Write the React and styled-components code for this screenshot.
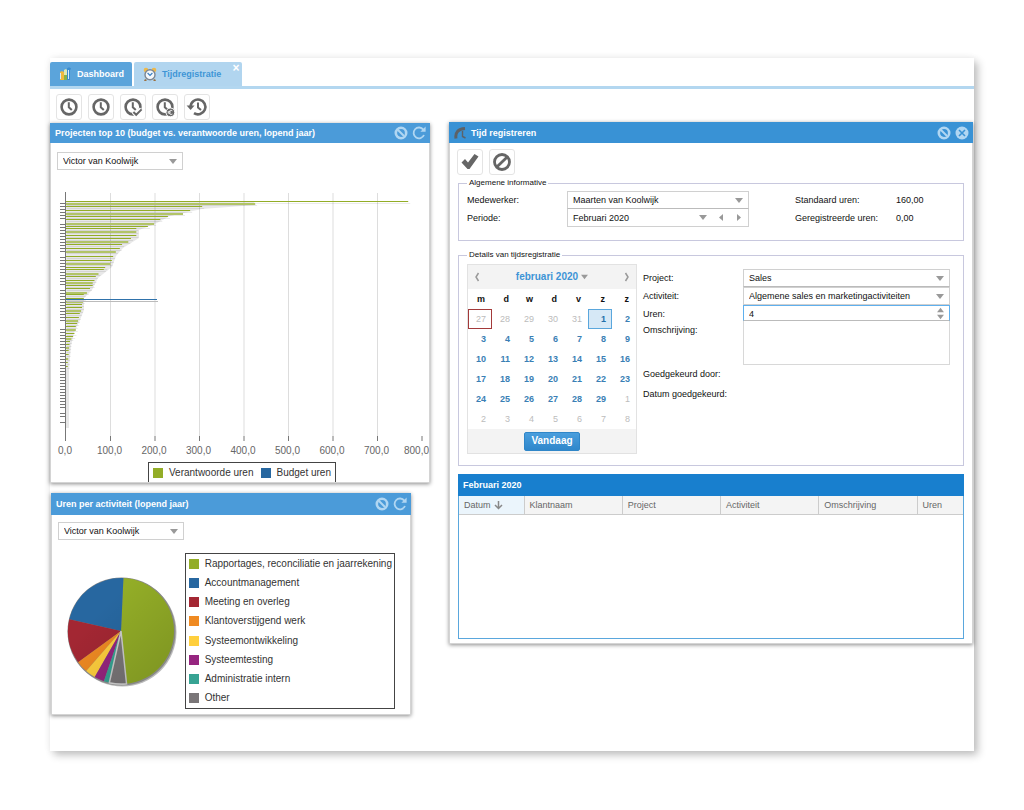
import React from 'react';
import styled, { createGlobalStyle, css } from 'styled-components';

const GlobalStyle = createGlobalStyle`
  *, *::before, *::after { box-sizing: border-box; }
  body {
    margin: 0;
    background: #fff;
    color: #111;
    font: 9px/12px 'Liberation Sans', Arial, sans-serif;
  }
  button, input, select, textarea { font: inherit; color: inherit; margin: 0; border-radius: 0; }
  button { padding: 0; border: 0; background: none; cursor: pointer; }
  svg { display: block; }
`;

const Page = styled.div`
  padding: 58px 50px;
`;

const AppFrame = styled.main`
  padding: 4px 0 36px;
  background: #fff;
  box-shadow: 4px 4px 8px rgba(0, 0, 0, 0.24), 0 0 8px rgba(0, 0, 0, 0.06);
`;

const TabBar = styled.nav`
  display: flex;
  gap: 2px;
  border-bottom: 3px solid #b3d7f0;
`;

const Tab = styled.a`
  display: flex;
  align-items: center;
  gap: 5px;
  height: 24px;
  padding: 0 ${(p) => (p.$closable ? '2px' : '8px')} 0 9px;
  border-radius: 2px 2px 0 0;
  background: ${(p) => (p.$current ? '#b1d5ef' : '#5ba4db')};
  color: ${(p) => (p.$current ? '#3f95d6' : '#fff')};
  font-weight: bold;
  text-decoration: none;
`;

const TabClose = styled.button`
  align-self: flex-start;
  width: 8px;
  height: 12px;
  margin-left: 6px;
  color: #fff;
  font-size: 12px;
  line-height: 12px;
`;

const Toolbar = styled.div`
  display: flex;
  gap: 6px;
  padding: ${(p) => (p.$inWindow ? '6px 7px 3px' : '5px 6px 2px')};
`;

const ToolButton = styled.button`
  display: grid;
  place-items: center;
  width: 26px;
  height: 26px;
  border: 1px solid #e4e4e4;
  border-radius: 3px;
  color: #666;
`;

const Workspace = styled.div`
  display: grid;
  grid-template-columns: 380fr 524fr;
  align-items: start;
  gap: 19px;
  padding-right: 1px;
`;

const Column = styled.div`
  display: grid;
  gap: 10px;
  padding-top: 1px;
`;

const Panel = styled.section`
  margin: ${(p) => (p.$narrow ? '0 19px 0 1px' : '0')};
  border: 1px solid #d4d4d4;
  border-top: 0;
  background: #fff;
  box-shadow: 0 1px 4px rgba(0, 0, 0, 0.45);
`;

const HEADER_HEIGHTS = { small: '20px', medium: '21px', large: '22px' };

const PanelHeader = styled.header`
  display: flex;
  align-items: center;
  gap: 4px;
  height: ${(p) => HEADER_HEIGHTS[p.$size]};
  margin: 0 -1px;
  padding: 0 4px 0 5px;
  background: ${(p) => (p.$active ? '#3992d5' : '#4b9bd9')};
  color: #fff;
`;

const PanelTitle = styled.h2`
  flex: 1;
  margin: 0;
  font-size: 9px;
  line-height: 12px;
  white-space: nowrap;
`;

const HeaderButton = styled.button`
  width: 14px;
  height: 14px;
  color: #b0d6f2;
`;

const SelectBox = styled.div`
  display: grid;
  flex: 1;
  align-items: center;
  height: ${(p) => (p.$bare ? '100%' : '18px')};
  border: ${(p) => (p.$bare ? '0' : '1px solid #d0d0d0')};
  ${(p) => p.$joined && css`border-bottom-color: #bbb;`}
  svg { grid-area: 1 / 1; justify-self: end; margin-right: 5px; pointer-events: none; }
`;

const Select = styled.select`
  grid-area: 1 / 1;
  width: 100%;
  height: 100%;
  padding: 0 14px 0 5px;
  border: 0;
  appearance: none;
  background: none;
  outline: 0;
`;

const EmployeeFilter = styled.div`
  width: 126px;
  padding-top: ${(p) => (p.$tight ? '7px' : '9px')};
  margin-left: 6px;
`;

const Chart = styled.svg`
  width: 100%;
  font: 10px 'Liberation Sans', Arial, sans-serif;
`;

const BarLegend = styled.ul`
  display: flex;
  gap: 7px;
  width: fit-content;
  height: 20px;
  margin: 0 93px 0 auto;
  padding: 0 4px;
  border: 1px solid #444;
  border-bottom: 0;
  list-style: none;
`;

const LegendItem = styled.li`
  display: flex;
  align-items: center;
  gap: 6px;
  color: #333;
  font-size: 10px;
  line-height: 12px;
  white-space: nowrap;
`;

const Swatch = styled.span`
  width: 10px;
  height: 10px;
  background: ${(p) => p.$color};
`;

const PieArea = styled.div`
  display: flex;
  justify-content: space-between;
  align-items: center;
  padding: 13px 15px 5px 12px;
`;

const PieLegend = styled.ul`
  display: flex;
  flex-direction: column;
  justify-content: space-around;
  min-height: 156px;
  margin: 0;
  padding: 0 2px 0 3px;
  border: 1px solid #444;
  list-style: none;
`;

const Window = styled(Panel)`
  padding-bottom: 4px;
`;

const Group = styled.fieldset`
  margin: 0 8px ${(p) => (p.$last ? '8px' : '9px')};
  min-width: 0;
  padding: ${(p) => (p.$last ? '4px 13px 11px 8px' : '3px 5px 13px 8px')};
  border: 1px solid #c8c8de;
`;

const Legend = styled.legend`
  padding: 0 2px;
  font-size: 8px;
  line-height: 10px;
`;

const InfoGrid = styled.div`
  display: grid;
  grid-template-columns: 100px 182fr 46fr 101px 62fr;
  grid-template-rows: 18px 18px;
`;

const Label = styled.label`
  grid-column: ${(p) => p.$col || 1};
  padding-top: 3px;
  white-space: nowrap;
`;

const Value = styled.output`
  grid-column: 5;
  padding-top: 3px;
`;

const FieldRow = styled.div`
  display: flex;
  align-items: center;
  grid-column: 2;
  height: 18px;
  border: 1px solid #d0d0d0;
  border-top: 0;
`;

const StepButton = styled.button`
  display: grid;
  place-items: center;
  width: ${(p) => (p.$vertical ? '9px' : '18px')};
  height: ${(p) => (p.$vertical ? '7px' : '16px')};
`;

const DetailLayout = styled.div`
  display: grid;
  grid-template-columns: 170px 1fr;
  gap: 6px;
`;

const Calendar = styled.section`
  border: 1px solid #e2e2e2;
`;

const CalendarBar = styled.div`
  display: flex;
  align-items: center;
  justify-content: ${(p) => (p.$center ? 'center' : 'space-between')};
  height: 24px;
  padding: 0 6px;
  background: #f3f3f3;
`;

const MonthButton = styled.button`
  display: flex;
  align-items: center;
  gap: 3px;
  color: #3d94d6;
  font-size: 10px;
  font-weight: bold;
`;

const MonthTable = styled.table`
  width: 100%;
  border-collapse: collapse;
  table-layout: fixed;
  th { height: 20px; padding: 0 7px 0 0; color: #111; text-align: right; }
  td { height: 20px; padding: 0; }
`;

const Day = styled.button`
  display: block;
  width: 100%;
  height: 20px;
  padding-right: 5px;
  border: 1px solid transparent;
  color: ${(p) => (p.$outside ? '#bcbcbc' : '#3a7fb5')};
  font-weight: ${(p) => (p.$outside ? 'normal' : 'bold')};
  text-align: right;
  ${(p) => p.$today && css`border-color: #a33a3a;`}
  ${(p) => p.$selected && css`border-color: #5aa7dd; background: #d6e8f6; color: #2470aa;`}
`;

const TodayButton = styled.button`
  height: 19px;
  padding: 0 6px;
  border: 1px solid #2f86c8;
  border-radius: 2px;
  background: linear-gradient(#4a9edd, #2f87cb);
  color: #fff;
  font-size: 10px;
  font-weight: bold;
`;

const DetailGrid = styled.div`
  display: grid;
  grid-template-columns: 100px 1fr;
  grid-template-rows: 18px 18px 16px 44px 20px 20px;
  padding-top: 5px;
`;

const HoursBox = styled.div`
  display: flex;
  align-items: center;
  height: 16px;
  padding-right: 4px;
  border: 1px solid #5fb0ee;
  border-bottom-color: #bbb;
`;

const HoursInput = styled.input`
  flex: 1;
  min-width: 0;
  height: 14px;
  padding: 2px 5px 0;
  border: 0;
  outline: 0;
  background: none;
  appearance: textfield;
  &::-webkit-inner-spin-button { appearance: none; }
`;

const Notes = styled.textarea`
  height: 44px;
  border: 1px solid #d8d8d8;
  border-top: 0;
  resize: none;
  outline: 0;
`;

const TableFrame = styled.div`
  margin: 0 8px;
  border: 1px solid #5aa7dd;
  border-top: 0;
`;

const HoursTable = styled.table`
  width: 100%;
  border-collapse: collapse;
  table-layout: fixed;
  caption {
    height: 22px;
    margin: 0 -1px;
    padding: 5px;
    background: #187fce;
    color: #fff;
    font-weight: bold;
    text-align: left;
  }
  td { height: 124px; }
`;

const HeaderCell = styled.th`
  width: ${(p) => p.$width};
  height: 18px;
  padding: 0 5px;
  border-right: 1px solid #ccc;
  border-bottom: 1px solid #ccc;
  background: ${(p) => (p.$sorted ? '#ebf5fc' : '#f4f4f4')};
  color: #666;
  font-weight: normal;
  text-align: left;
  &:last-child { border-right: 0; }
`;

const SortLabel = styled.span`
  display: flex;
  align-items: center;
  gap: 3px;
`;

const ARROWS = {
  down: 'M0 1h8L4 6z',
  up: 'M0 6h8L4 1z',
  left: 'M6 0v7L2 3.5z',
  right: 'M2 0v7L6 3.5z',
};

function Arrow({ dir = 'down', size = 8 }) {
  return (
    <svg width={size} height={size - 1} viewBox="0 0 8 7" fill="#999" aria-hidden="true">
      <path d={ARROWS[dir]} />
    </svg>
  );
}

function Clock({ badge }) {
  return (
    <svg width="22" height="22" viewBox="0 0 22 22" fill="none" stroke="currentColor" strokeWidth="2.6" aria-hidden="true">
      {badge === 'history' ? (
        <>
          <path d="M4.6 10.5A7.4 7.4 0 1 1 8 17.2" />
          <path d="M.6 9.5h8l-4 4.600z" fill="currentColor" stroke="none" />
          <path d="M12 6.500v5l3 2.600" strokeWidth="2" />
        </>
      ) : (
        <>
          <circle cx="11" cy="11" r="7.4" />
          <path d="M10.8 6.2v5l3 2.8" strokeWidth="2" />
        </>
      )}
      {badge === 'check' && (
        <>
          <path d="M11.500 16l2.500 2.500 5.500-5.500" stroke="#fff" strokeWidth="4.500" />
          <path d="M11.400 16l2.800 2.800 5.400-5.400" strokeWidth="2" />
        </>
      )}
      {badge === 'euro' && (
        <>
          <circle cx="16.4" cy="16.4" r="4.400" fill="currentColor" stroke="#fff" strokeWidth="1" />
          <path d="M18.400 14.800a2.100 2.100 0 1 0 0 3.200M13.600 15.800h3.200M13.600 17h3.200" stroke="#fff" strokeWidth=".8" />
        </>
      )}
    </svg>
  );
}

const GLYPHS = {
  refresh: (
    <>
      <path d="M11.300 3.600A5.400 5.400 0 1 0 12 9" />
      <path d="M13.600.6v5.200H8.400z" fill="currentColor" stroke="none" />
    </>
  ),
  restore: (
    <>
      <circle cx="7" cy="7" r="5.200" strokeWidth="2.600" />
      <path d="M4 4l6 6" strokeWidth="2" />
    </>
  ),
  close: (
    <>
      <circle cx="7" cy="7" r="6.500" fill="currentColor" stroke="none" />
      <path d="M4 4l6 6M10 4l-6 6" stroke="#3992d5" strokeWidth="1.600" />
    </>
  ),
};

const Glyph = ({ name }) => (
  <svg width="14" height="14" viewBox="0 0 14 14" fill="none" stroke="currentColor" strokeWidth="1.8" aria-hidden="true">
    {GLYPHS[name]}
  </svg>
);

const ChartTabIcon = () => (
  <svg width="13" height="14" viewBox="0 0 13 14" aria-hidden="true">
    <path d="M1 5l2-1 2 1v8H1z" fill="#f0b93c" />
    <path d="M5 3l2-1 1 1v10H5z" fill="#dfe9b2" />
    <path d="M5 8h3v5H5z" fill="#86b34a" />
    <path d="M8 2c0-2 4-2 4 0l-1 1v10H8z" fill="#3a8cd0" />
    <path d="M9 3h1v9H9zM1 6h1v6H1z" fill="#d7ebfa" />
  </svg>
);

const AlarmIcon = () => (
  <svg width="14" height="14" viewBox="0 0 14 14" aria-hidden="true">
    <path d="M2 12l-1 2h2l1-1zM12 12l1 2h-2l-1-1z" fill="#9a7040" />
    <circle cx="3" cy="3" r="2.3" fill="#edb94b" />
    <circle cx="11" cy="3" r="2.3" fill="#edb94b" />
    <circle cx="7" cy="7.8" r="5" fill="#f4f8fb" stroke="#7d8793" strokeWidth="1.4" />
    <path d="M4.6 6l2.4 2.4L9.4 6" fill="none" stroke="#397fc1" strokeWidth="1.2" />
  </svg>
);

const GaugeIcon = () => (
  <svg width="13" height="14" viewBox="0 0 13 14" fill="none" stroke="#5c6268" aria-hidden="true">
    <path d="M2 12.500C1 6.500 4 3 11 2.600" strokeWidth="3" />
    <path d="M8.500 5v5.500l3 1.500" strokeWidth="1.400" />
  </svg>
);

const EMPLOYEES = ['Victor van Koolwijk', 'Maarten van Koolwijk'];

function EmployeeSelect({ id, value, label, joined }) {
  return (
    <SelectBox $joined={joined}>
      <Select id={id} aria-label={label} defaultValue={value}>
        {EMPLOYEES.map((name) => <option key={name}>{name}</option>)}
      </Select>
      <Arrow />
    </SelectBox>
  );
}

function PanelHead({ title, second, size, active, children }) {
  return (
    <PanelHeader $size={size} $active={active}>
      {children}
      <PanelTitle>{title}</PanelTitle>
      <HeaderButton aria-label="Venster herstellen"><Glyph name="restore" /></HeaderButton>
      <HeaderButton aria-label={second === 'close' ? 'Sluiten' : 'Vernieuwen'}><Glyph name={second} /></HeaderButton>
    </PanelHeader>
  );
}

const GREEN = '#93ad27';
const BLUE = '#2767a0';

// Vertical position and booked hours of every project.
const BARS = [
  [31, 769], [33, 425], [36, 306], [40, 279], [43, 263], [46, 229], [49, 212], [53, 198],
  [56, 184], [58, 158], [61, 158], [65, 158], [68, 146], [71, 140], [74, 126], [78, 121],
  [81, 112], [86, 106], [90, 103], [93, 100], [97, 88], [99, 85], [103, 73], [106, 67],
  [110, 64], [112, 60], [115, 60], [118, 54], [122, 47], [124, 40], [128, 40], [131, 38],
  [134, 36], [137, 36], [140, 34], [143, 31], [147, 29], [150, 27], [153, 25], [156, 22],
  [159, 22], [163, 19], [166, 16], [168, 12], [171, 9], [174, 8], [177, 7], [180, 6],
  [184, 6], [188, 5], [192, 4], [196, 4],
];

const TICKS = Array.from({ length: 74 }, (_, i) => 33 + i * 3).filter((y) => ![51, 84, 117, 153, 156, 240, 249].includes(y));

function BarChart() {
  const x = (hours) => 16 + hours * 0.445;
  return (
    <Chart viewBox="1 0 378 292" role="img" aria-label="Verantwoorde uren en budget uren per project">
      {[1, 2, 3, 4, 5, 6, 7, 8].map((n) => (
        <g key={n}>
          {n < 8 && <path d={`M${x(n * 100)} 23V266`} stroke="#ddd" />}
          <path d={`M${x(n * 100)} 266v5`} stroke="#777" />
        </g>
      ))}
      <path
        d="M16 32H204L206 35L152 39L120 46L105 54L89 60V68L73 78L66 86L62 97L48 108L42 120L34 128V140L30 150L24 163L21 176L19 200V258H16z"
        fill="#000"
        opacity=".09"
      />
      {BARS.map(([y, hours], i) => (
        <g key={y}>
          <rect x="17" y={y + 2} width={x(hours) - 15} height="1" fill="#000" opacity=".08" />
          <rect x="16" y={y} width={x(hours) - 16} height={i % 3 === 1 ? 2 : 1} fill={i % 3 === 1 ? '#b2c468' : GREEN} />
        </g>
      ))}
      <rect x="17" y="131" width="91" height="1" fill="#bbb" />
      <rect x="16" y="129" width="91" height="1" fill="#2f72ab" />
      {TICKS.map((y) => <rect key={y} x="10" y={y} width="6" height="1" fill="#777" />)}
      <path d="M15.500 22V271" stroke="#777" />
      {[0, 1, 2, 3, 4, 5, 6, 7, 8].map((n) => (
        <text key={n} x={n === 8 ? 379 : x(n * 100) - 1} y="284" textAnchor={n === 8 ? 'end' : 'middle'} fill="#666">
          {`${n * 100},0`}
        </text>
      ))}
    </Chart>
  );
}

const SLICES = [
  { label: 'Rapportages, reconciliatie en jaarrekening', color: GREEN, from: 2.6, to: 174 },
  { label: 'Accountmanagement', color: BLUE, from: 282.7, to: 362.6 },
  { label: 'Meeting en overleg', color: '#a32733', from: 234, to: 282.7 },
  { label: 'Klantoverstijgend werk', color: '#ef8a22', from: 221, to: 234 },
  { label: 'Systeemontwikkeling', color: '#ffcf3d', from: 209.7, to: 221 },
  { label: 'Systeemtesting', color: '#96257f', from: 198.8, to: 209.7 },
  { label: 'Administratie intern', color: '#37a393', from: 192.7, to: 198.8 },
  { label: 'Other', color: '#7a7678', from: 174, to: 192.7 },
];

function PieChart() {
  const point = (deg) => {
    const a = (deg * Math.PI) / 180;
    return `${57 + 53 * Math.sin(a)} ${57 - 53 * Math.cos(a)}`;
  };
  return (
    <svg width="114" height="114" viewBox="0 0 114 114" role="img" aria-label="Uren per activiteit">
      <defs>
        <linearGradient id="shade" x1="0" y1="0" x2="1" y2="1">
          <stop offset=".3" stopOpacity="0" />
          <stop offset="1" stopOpacity=".15" />
        </linearGradient>
      </defs>
      <circle cx="58.500" cy="58.500" r="54" fill="#bbb" />
      <circle cx="57.500" cy="57.500" r="54" fill="#888" />
      {SLICES.map((s) => (
        <path
          key={s.label}
          d={`M57 57L${point(s.from)}A53 53 0 0 1 ${point(s.to)}z`}
          fill={s.color}
          stroke={s.label === 'Other' ? '#ccc' : 'none'}
          strokeWidth="1.5"
        />
      ))}
      <circle cx="57" cy="57" r="53" fill="url(#shade)" />
    </svg>
  );
}

const WEEKDAYS = ['m', 'd', 'w', 'd', 'v', 'z', 'z'];
// Six weeks, starting on Monday 27 January.
const WEEKS = Array.from({ length: 6 }, (_, week) =>
  Array.from({ length: 7 }, (_, day) => {
    const n = week * 7 + day - 4;
    return { day: n < 1 ? n + 31 : n > 29 ? n - 29 : n, outside: n < 1 || n > 29, today: n === -4, selected: n === 1 };
  }),
);

const Chevron = ({ d }) => (
  <svg width="6" height="10" viewBox="0 0 6 10" fill="none" stroke="#999" strokeWidth="1.5" aria-hidden="true">
    <path d={d} />
  </svg>
);

function MonthPicker() {
  return (
    <Calendar aria-label="Datum kiezen">
      <CalendarBar>
        <button aria-label="Vorige maand"><Chevron d="M4.500 1L2 5l2.500 4" /></button>
        <MonthButton>februari 2020 <Arrow size={7} /></MonthButton>
        <button aria-label="Volgende maand"><Chevron d="M1.500 1L4 5L1.500 9" /></button>
      </CalendarBar>
      <MonthTable>
        <thead>
          <tr>{WEEKDAYS.map((d, i) => <th key={i} scope="col">{d}</th>)}</tr>
        </thead>
        <tbody>
          {WEEKS.map((week, i) => (
            <tr key={i}>
              {week.map((d) => (
                <td key={d.day}>
                  <Day $outside={d.outside} $today={d.today} $selected={d.selected}>{d.day}</Day>
                </td>
              ))}
            </tr>
          ))}
        </tbody>
      </MonthTable>
      <CalendarBar $center>
        <TodayButton>Vandaag</TodayButton>
      </CalendarBar>
    </Calendar>
  );
}

const COLUMNS = [
  ['Datum', '65px'], ['Klantnaam', '19.5%'], ['Project', '19.5%'],
  ['Activiteit', '19.5%'], ['Omschrijving', '19.5%'], ['Uren', 'auto'],
];

function TimeWindow() {
  return (
    <Window>
      <PanelHead title="Tijd registreren" second="close" active size="medium">
        <GaugeIcon />
      </PanelHead>
      <Toolbar $inWindow>
        <ToolButton aria-label="Opslaan">
          <svg width="20" height="20" viewBox="0 0 20 20" fill="currentColor" aria-hidden="true">
            <path d="M1.500 10.500l3.500-3.500 3 3.500L14.500 2l4 2.500L9.500 17H7.500z" />
          </svg>
        </ToolButton>
        <ToolButton aria-label="Annuleren">
          <svg width="20" height="20" viewBox="0 0 20 20" fill="none" stroke="currentColor" strokeWidth="2.800" aria-hidden="true">
            <circle cx="10" cy="10" r="7.500" />
            <path d="M4.800 15L15.200 5" />
          </svg>
        </ToolButton>
      </Toolbar>

      <Group>
        <Legend>Algemene informative</Legend>
        <InfoGrid>
          <Label htmlFor="employee">Medewerker:</Label>
          <EmployeeSelect id="employee" value="Maarten van Koolwijk" joined />
          <Label as="span" $col={4}>Standaard uren:</Label>
          <Value>160,00</Value>
          <Label htmlFor="period">Periode:</Label>
          <FieldRow>
            <SelectBox $bare>
              <Select id="period"><option>Februari 2020</option></Select>
              <Arrow />
            </SelectBox>
            <StepButton aria-label="Vorige periode"><Arrow dir="left" /></StepButton>
            <StepButton aria-label="Volgende periode"><Arrow dir="right" /></StepButton>
          </FieldRow>
          <Label as="span" $col={4}>Geregistreerde uren:</Label>
          <Value>0,00</Value>
        </InfoGrid>
      </Group>

      <Group $last>
        <Legend>Details van tijdsregistratie</Legend>
        <DetailLayout>
          <MonthPicker />
          <DetailGrid>
            <Label htmlFor="project">Project:</Label>
            <SelectBox $joined>
              <Select id="project"><option>Sales</option></Select>
              <Arrow />
            </SelectBox>
            <Label htmlFor="activity">Activiteit:</Label>
            <SelectBox>
              <Select id="activity"><option>Algemene sales en marketingactiviteiten</option></Select>
              <Arrow />
            </SelectBox>
            <Label htmlFor="hours">Uren:</Label>
            <HoursBox>
              <HoursInput id="hours" type="number" defaultValue="4" />
              <div>
                <StepButton $vertical aria-label="Meer uren"><Arrow dir="up" size={7} /></StepButton>
                <StepButton $vertical aria-label="Minder uren"><Arrow size={7} /></StepButton>
              </div>
            </HoursBox>
            <Label htmlFor="notes">Omschrijving:</Label>
            <Notes id="notes" />
            <Label as="span">Goedgekeurd door:</Label>
            <Label as="span">Datum goedgekeurd:</Label>
          </DetailGrid>
        </DetailLayout>
      </Group>

      <TableFrame>
        <HoursTable>
          <caption>Februari 2020</caption>
          <thead>
            <tr>
              {COLUMNS.map(([name, width], i) => (
                <HeaderCell key={name} scope="col" $width={width} $sorted={i === 0} aria-sort={i === 0 ? 'descending' : undefined}>
                  <SortLabel>
                    {name}
                    {i === 0 && (
                      <svg width="9" height="10" viewBox="0 0 9 10" fill="none" stroke="#888" strokeWidth="1.500" aria-hidden="true">
                        <path d="M4.500 1v7M1 5l3.500 3.500L8 5" />
                      </svg>
                    )}
                  </SortLabel>
                </HeaderCell>
              ))}
            </tr>
          </thead>
          <tbody><tr><td colSpan={6} /></tr></tbody>
        </HoursTable>
      </TableFrame>
    </Window>
  );
}

export default function App() {
  return (
    <Page>
      <GlobalStyle />
      <AppFrame>
        <TabBar>
          <Tab href="#dashboard"><ChartTabIcon />Dashboard</Tab>
          <Tab href="#tijdregistratie" $current $closable>
            <AlarmIcon />Tijdregistratie
            <TabClose as="span" role="button" aria-label="Tabblad sluiten">×</TabClose>
          </Tab>
        </TabBar>
        <Toolbar>
          <ToolButton aria-label="Tijd registreren"><Clock /></ToolButton>
          <ToolButton aria-label="Uren bekijken"><Clock /></ToolButton>
          <ToolButton aria-label="Uren goedkeuren"><Clock badge="check" /></ToolButton>
          <ToolButton aria-label="Uren factureren"><Clock badge="euro" /></ToolButton>
          <ToolButton aria-label="Historie"><Clock badge="history" /></ToolButton>
        </Toolbar>
        <Workspace>
          <Column>
            <Panel>
              <PanelHead size="small" title="Projecten top 10 (budget vs. verantwoorde uren, lopend jaar)" second="refresh" />
              <EmployeeFilter><EmployeeSelect value="Victor van Koolwijk" label="Medewerker" /></EmployeeFilter>
              <BarChart />
              <BarLegend>
                <LegendItem><Swatch $color={GREEN} />Verantwoorde uren</LegendItem>
                <LegendItem><Swatch $color={BLUE} />Budget uren</LegendItem>
              </BarLegend>
            </Panel>
            <Panel $narrow>
              <PanelHead size="large" title="Uren per activiteit (lopend jaar)" second="refresh" />
              <EmployeeFilter $tight><EmployeeSelect value="Victor van Koolwijk" label="Medewerker" /></EmployeeFilter>
              <PieArea>
                <PieChart />
                <PieLegend>
                  {SLICES.map((s) => <LegendItem key={s.label}><Swatch $color={s.color} />{s.label}</LegendItem>)}
                </PieLegend>
              </PieArea>
            </Panel>
          </Column>
          <TimeWindow />
        </Workspace>
      </AppFrame>
    </Page>
  );
}
